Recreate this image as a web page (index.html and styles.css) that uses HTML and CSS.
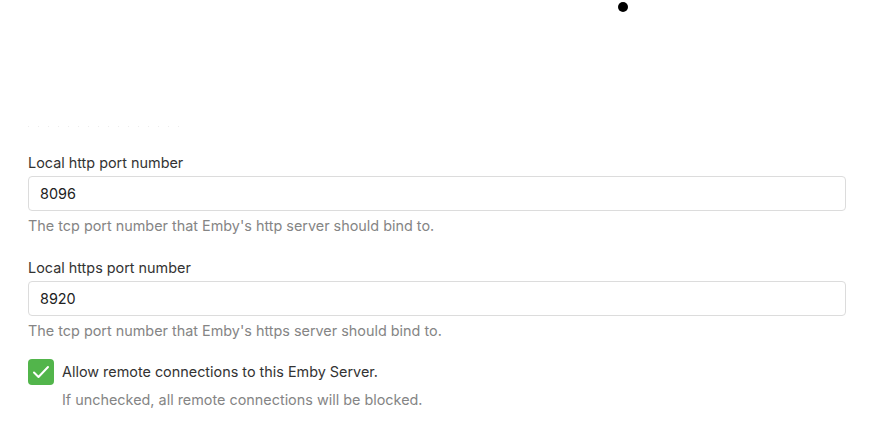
FILE: index.html
```html
<!DOCTYPE html>
<html>
<head>
<meta charset="utf-8">
<link rel="stylesheet" href="styles.css">
</head>
<body>
<div class="page">
  <div class="top">
    <div class="cursor-dot"></div>
    <div class="faint-line"></div>
  </div>
  <div class="field">
    <label class="field-label">Local http port number</label>
    <div class="input">8096</div>
    <div class="help">The tcp port number that Emby's http server should bind to.</div>
  </div>
  <div class="field">
    <label class="field-label">Local https port number</label>
    <div class="input">8920</div>
    <div class="help">The tcp port number that Emby's https server should bind to.</div>
  </div>
  <div class="check-row">
    <div class="checkbox">
      <svg width="26" height="26" viewBox="0 0 26 26"><path d="M6 13.5 L10.5 18 L20 8" fill="none" stroke="#fff" stroke-width="2" stroke-linecap="round" stroke-linejoin="round"/></svg>
    </div>
    <div class="check-text">
      <div class="check-label">Allow remote connections to this Emby Server.</div>
      <div class="check-help">If unchecked, all remote connections will be blocked.</div>
    </div>
  </div>
</div>
</body>
</html>
```
FILE: styles.css
```css
html, body {
  margin: 0;
  padding: 0;
  background: #fff;
}
body {
  font-family: Inter, "Noto Sans", sans-serif;
  color: #333;
}
.page {
  padding: 0 43px 0 28px;
}
.top {
  position: relative;
  height: 153px;
}
.cursor-dot {
  position: absolute;
  left: 590px;
  top: 2px;
  width: 10px;
  height: 10px;
  border-radius: 50%;
  background: #000;
}
.faint-line {
  position: absolute;
  left: 0;
  top: 126px;
  width: 155px;
  height: 1px;
  background: repeating-linear-gradient(90deg, #ececec 0 1px, transparent 1px 10px);
}
.field {
  margin-bottom: 22px;
}
.field-label {
  display: block;
  font-size: 14.4px;
  line-height: 20px;
  color: #333;
  margin-bottom: 3px;
}
.input {
  box-sizing: border-box;
  height: 35px;
  border: 1px solid #dcdcdc;
  border-radius: 4px;
  padding: 0 11px;
  font-size: 14.4px;
  line-height: 33px;
  color: #222;
}
.help {
  margin-top: 5px;
  font-size: 14.4px;
  line-height: 20px;
  color: #858585;
}
.check-row {
  display: flex;
  align-items: flex-start;
  gap: 8px;
  margin-top: -4px;
}
.checkbox {
  width: 26px;
  height: 26px;
  border-radius: 4px;
  background: #52b54b;
  display: flex;
  align-items: center;
  justify-content: center;
  flex: none;
}
.check-label {
  font-size: 14.4px;
  line-height: 26px;
  color: #333;
}
.check-help {
  margin-top: 5px;
  font-size: 14.4px;
  line-height: 20px;
  color: #858585;
}
```
